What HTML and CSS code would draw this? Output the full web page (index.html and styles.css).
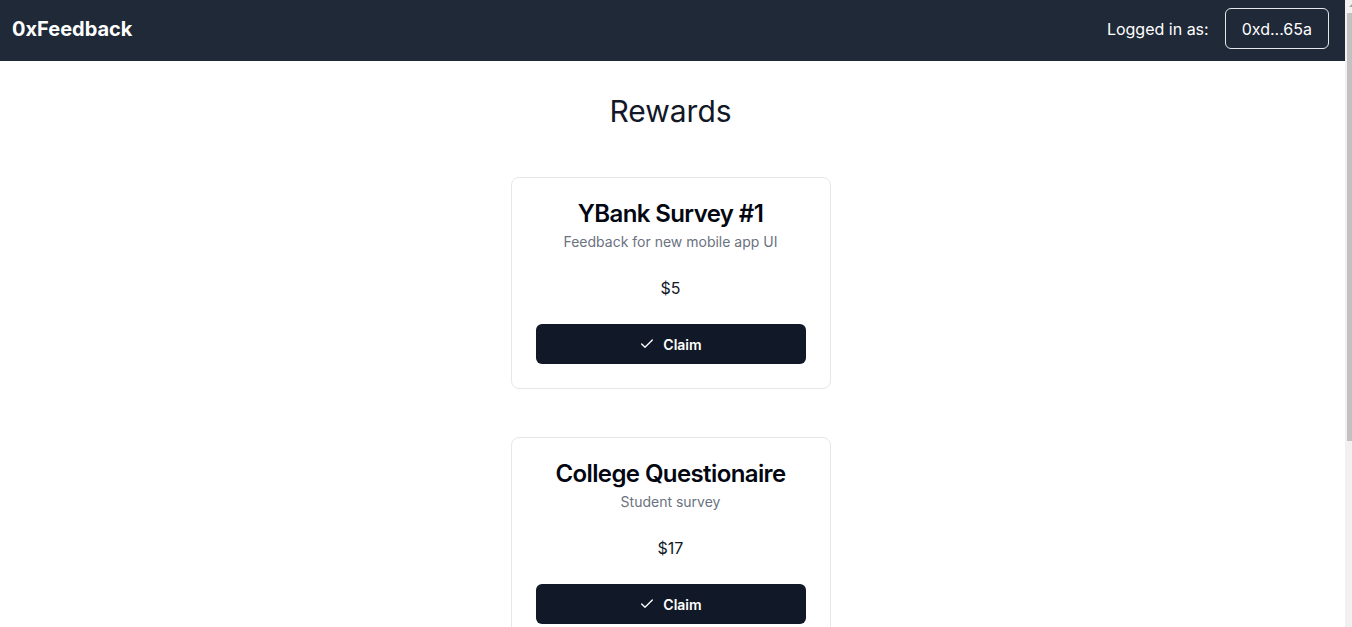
FILE: index.html
```html
<!DOCTYPE html>
<html lang="en">
<head>
<meta charset="utf-8">
<title>0xFeedback</title>
<link rel="stylesheet" href="styles.css">
</head>
<body>
<header class="topbar">
  <div class="logo">0xFeedback</div>
  <div class="account">
    <span class="account-label">Logged in as:</span>
    <button class="account-btn">0xd...65a</button>
  </div>
</header>
<main class="page">
  <h1 class="page-title">Rewards</h1>
  <div class="reward-list">
    <div class="card">
      <h2 class="card-title">YBank Survey #1</h2>
      <p class="card-desc">Feedback for new mobile app UI</p>
      <p class="card-amount">$5</p>
      <button class="claim-btn">
        <svg class="check" viewBox="0 0 24 24" width="16" height="16" fill="none" stroke="currentColor" stroke-width="2" stroke-linecap="round" stroke-linejoin="round"><path d="M20 6 9 17l-5-5"/></svg>
        <span>Claim</span>
      </button>
    </div>
    <div class="card">
      <h2 class="card-title">College Questionaire</h2>
      <p class="card-desc">Student survey</p>
      <p class="card-amount">$17</p>
      <button class="claim-btn">
        <svg class="check" viewBox="0 0 24 24" width="16" height="16" fill="none" stroke="currentColor" stroke-width="2" stroke-linecap="round" stroke-linejoin="round"><path d="M20 6 9 17l-5-5"/></svg>
        <span>Claim</span>
      </button>
    </div>
  </div>
</main>
<div class="fake-scrollbar" aria-hidden="true">
  <div class="fake-scrollbar-arrow"></div>
  <div class="fake-scrollbar-thumb"></div>
</div>
</body>
</html>
```

FILE: styles.css
```css
* {
  box-sizing: border-box;
}

html, body {
  margin: 0;
  padding: 0;
  background: #ffffff;
}

body {
  font-family: Inter, "Noto Sans", sans-serif;
  color: #111827;
  padding-right: 7px;
  -webkit-font-smoothing: antialiased;
}

.topbar {
  height: 61px;
  background: #1f2937;
  display: flex;
  align-items: center;
  justify-content: space-between;
  padding: 0 16px 4px 12px;
}

.logo {
  color: #ffffff;
  font-size: 20px;
  font-weight: 700;
}

.account {
  display: flex;
  align-items: center;
  gap: 16px;
}

.account-label {
  color: #ffffff;
  font-size: 16px;
}

.account-btn {
  font-family: inherit;
  font-size: 16px;
  color: #ffffff;
  background: transparent;
  border: 1px solid #e5e7eb;
  border-radius: 6px;
  height: 41px;
  padding: 0 16px;
  cursor: pointer;
}

.page {
  display: flex;
  flex-direction: column;
  align-items: center;
  padding: 32px 4px 250px 0;
}

.page-title {
  margin: 0 0 48px;
  font-size: 30px;
  line-height: 36px;
  font-weight: 400;
  color: #111827;
}

.reward-list {
  display: flex;
  flex-direction: column;
  gap: 48px;
}

.card {
  width: 320px;
  border: 1px solid #e5e7eb;
  border-radius: 8px;
  padding: 24px;
  display: flex;
  flex-direction: column;
  align-items: center;
  background: #ffffff;
}

.card-title {
  margin: 0 0 6px;
  font-size: 24px;
  line-height: 24px;
  font-weight: 600;
  color: #030712;
  letter-spacing: -0.6px;
}

.card-desc {
  margin: 0 0 24px;
  font-size: 14px;
  line-height: 20px;
  color: #6b7280;
}

.card-amount {
  margin: 0 0 24px;
  font-size: 16px;
  line-height: 24px;
  color: #111827;
}

.claim-btn {
  width: 100%;
  height: 40px;
  border: none;
  border-radius: 6px;
  background: #111827;
  color: #ffffff;
  font-family: inherit;
  font-size: 14px;
  font-weight: 600;
  display: flex;
  align-items: center;
  justify-content: center;
  gap: 8px;
  cursor: pointer;
}

.check {
  display: block;
}

.fake-scrollbar {
  position: fixed;
  top: 0;
  right: 0;
  bottom: 0;
  width: 7px;
  background: #f1f1f1;
}

.fake-scrollbar-arrow {
  position: absolute;
  top: 4px;
  right: 0;
  width: 0;
  height: 0;
  border-left: 3px solid transparent;
  border-bottom: 3px solid #a3a3a3;
}

.fake-scrollbar-thumb {
  position: absolute;
  top: 13px;
  left: 2px;
  right: 0;
  height: 428px;
  background: #c1c1c1;
}
```
